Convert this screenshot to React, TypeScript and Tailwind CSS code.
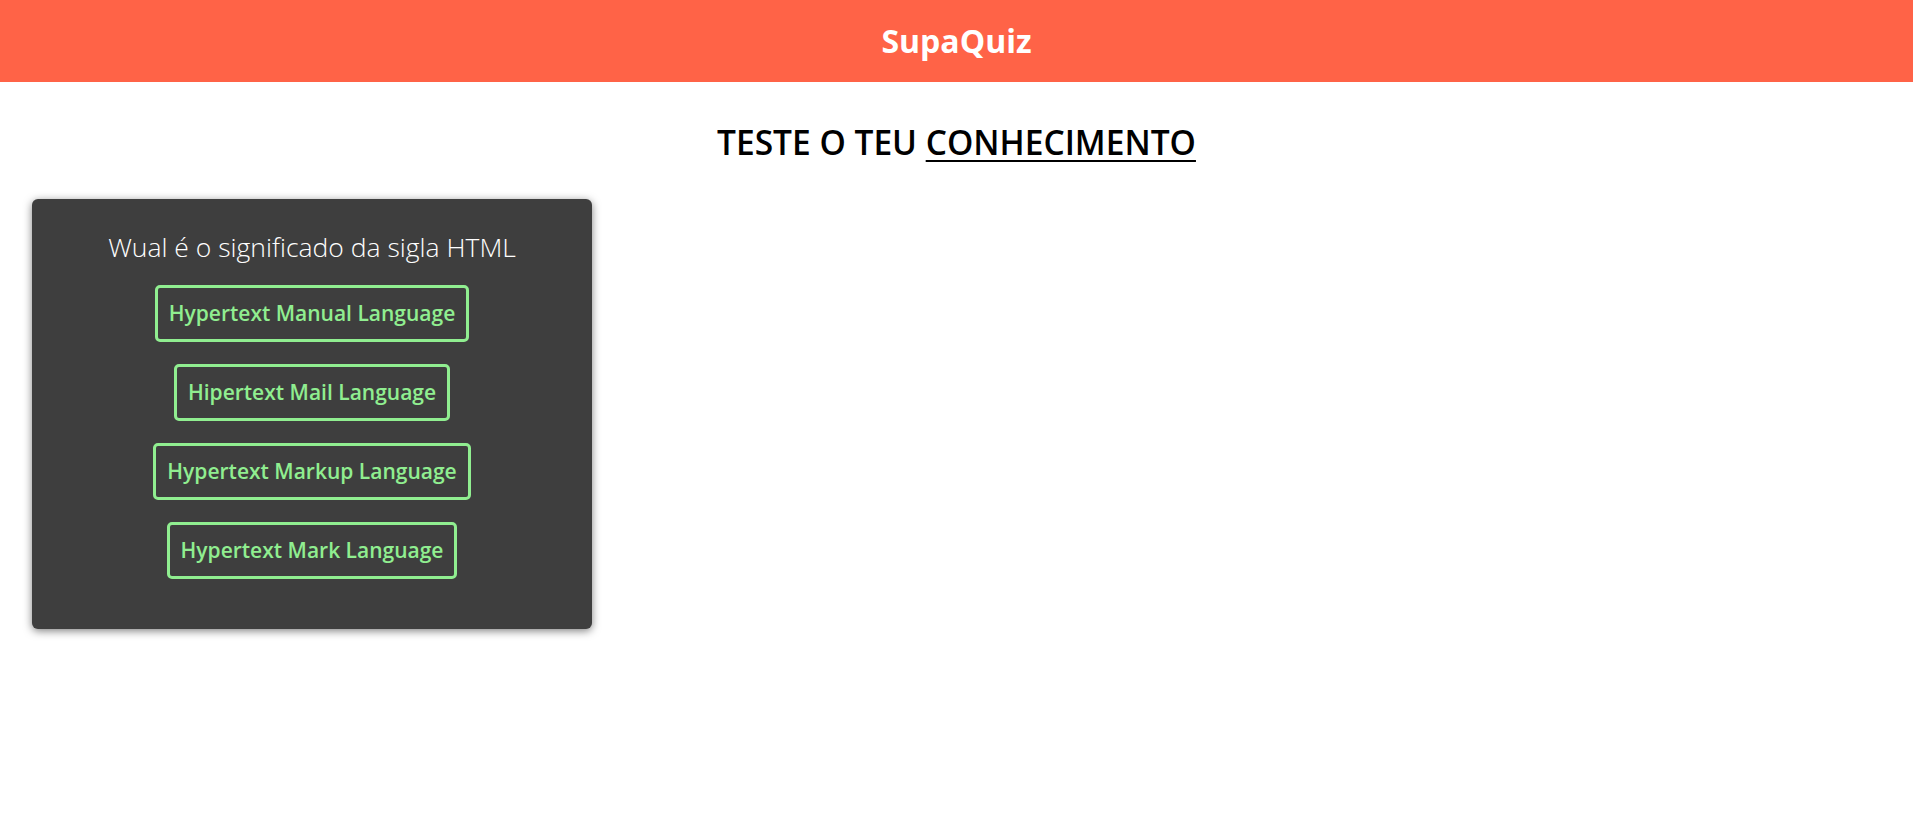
const options = [
  'Hypertext Manual Language',
  'Hipertext Mail Language',
  'Hypertext Markup Language',
  'Hypertext Mark Language',
];

export default function App() {
  return (
    <div className="min-h-screen bg-white font-['Open_Sans',sans-serif]">
      <header className="h-[82px] bg-[#ff6347] flex items-center justify-center">
        <h1 className="text-white text-[32px] font-bold leading-none">SupaQuiz</h1>
      </header>

      <h2 className="mt-[40px] text-center text-[33.5px] leading-[40px] font-semibold text-black">
        TESTE O TEU <span className="underline underline-offset-[5px] decoration-2">CONHECIMENTO</span>
      </h2>

      <div className="mt-[37px] ml-[32px] w-[560px] bg-[#3e3e3e] rounded-[6px] shadow-[0_2px_8px_rgba(0,0,0,0.5)] pt-[32px] pb-[50px] flex flex-col items-center gap-[22px]">
        <p className="text-white text-[26.5px] leading-[32px] font-light">Wual é o significado da sigla HTML</p>
        {options.map((o) => (
          <button
            key={o}
            className="h-[57px] px-[11px] border-[3px] border-[#90ee90] rounded-[5px] text-[#90ee90] text-[21px] font-semibold"
          >
            {o}
          </button>
        ))}
      </div>
    </div>
  );
}
